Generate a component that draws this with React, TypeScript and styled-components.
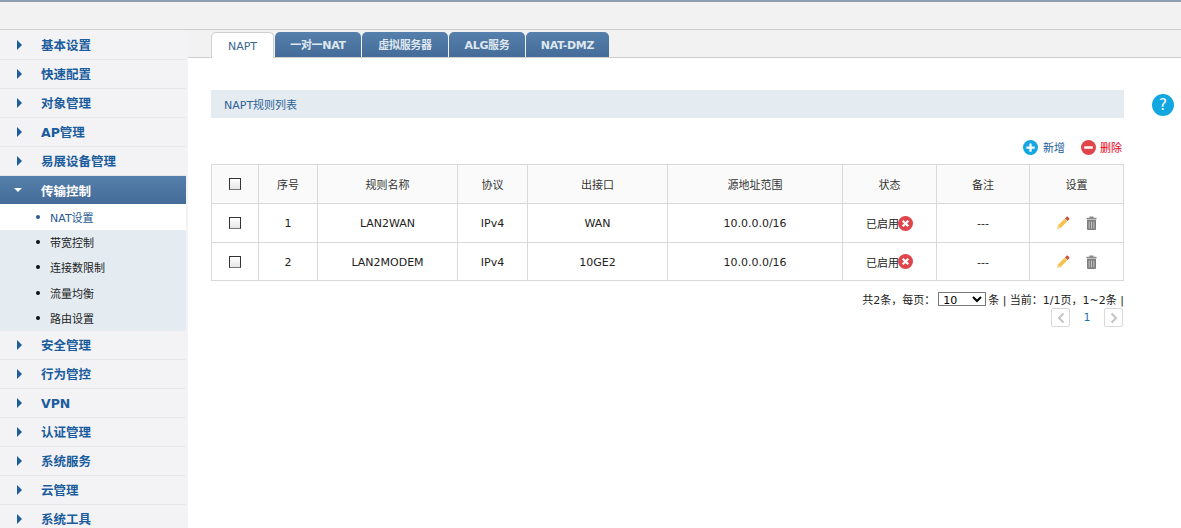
import styled, { createGlobalStyle } from "styled-components";

const FONT = `"DejaVu Sans", "Noto Sans CJK SC", sans-serif`;

const GlobalStyle = createGlobalStyle`
  html, body {
    margin: 0;
    padding: 0;
    height: 100%;
    background: #fff;
    overflow: hidden;
  }
  #root {
    height: 528px;
    overflow: hidden;
  }
  * {
    box-sizing: border-box;
  }
`;

const topMenus = ["基本设置", "快速配置", "对象管理", "AP管理", "易展设备管理"];
const subMenus = ["NAT设置", "带宽控制", "连接数限制", "流量均衡", "路由设置"];
const bottomMenus = ["安全管理", "行为管控", "VPN", "认证管理", "系统服务", "云管理", "系统工具"];
const tabs = ["NAPT", "一对一NAT", "虚拟服务器", "ALG服务", "NAT-DMZ"];
const tabWidths = [63, 86, 86, 76, 83];
const columns = [
  { title: "序号", width: 59 },
  { title: "规则名称", width: 140 },
  { title: "协议", width: 70 },
  { title: "出接口", width: 140 },
  { title: "源地址范围", width: 175 },
  { title: "状态", width: 94 },
  { title: "备注", width: 93 },
  { title: "设置", width: 94 },
];
const rules = [
  { id: 1, name: "LAN2WAN", protocol: "IPv4", port: "WAN", range: "10.0.0.0/16" },
  { id: 2, name: "LAN2MODEM", protocol: "IPv4", port: "10GE2", range: "10.0.0.0/16" },
];

function CircleIcon({ color, size, mark }: { color: string; size: number; mark: "plus" | "minus" | "cross" }) {
  return (
    <svg width={size} height={size} viewBox="0 0 16 16">
      <circle cx="8" cy="8" r="8" fill={color} />
      {mark === "plus" && <path d="M8 3.6v8.8M3.6 8h8.8" stroke="#fff" strokeWidth="2.4" />}
      {mark === "minus" && <path d="M3.4 8h9.2" stroke="#fff" strokeWidth="2.6" />}
      {mark === "cross" && <path d="M5 5l6 6M11 5l-6 6" stroke="#fff" strokeWidth="2.4" />}
    </svg>
  );
}

function PencilIcon() {
  return (
    <svg width="14" height="14" viewBox="0 0 14 14">
      <path d="M1 13l.9-3.6 6.6-6.6 2.7 2.7-6.6 6.6z" fill="#f5c14f" />
      <path d="M1 13l.9-3.6 2.7 2.7z" fill="#f8dc9a" />
      <path d="M8.9 2.4l1.5-1.5c.5-.5 1.1-.5 1.6 0l1.1 1.1c.5.5.5 1.100 0 1.600l-1.500 1.500z" fill="#c8573a" />
    </svg>
  );
}

function TrashIcon() {
  return (
    <svg width="11" height="14" viewBox="0 0 11 14">
      <path d="M3.500 .5h4v1.200h3v1.800H.5V1.700h3z" fill="#8a8a8a" />
      <path d="M1 4h9v9a1 1 0 0 1-1 1H2a1 1 0 0 1-1-1z" fill="#7d7d7d" />
      <path d="M3.200 5.500v7M5.500 5.500v7M7.800 5.500v7" stroke="#c4c4c4" strokeWidth="1" />
    </svg>
  );
}

export default function App() {
  return (
    <>
      <GlobalStyle />
      <Page>
        <TopBar />
        <Layout>
          <Sidebar>
            {topMenus.map((item) => (
              <MenuItem key={item}>
                <Arrow />
                {item}
              </MenuItem>
            ))}
            <ActiveMenu>
              <DownArrow />
              传输控制
            </ActiveMenu>
            <SubMenu>
              {subMenus.map((item, index) => (
                <SubItem key={item} $active={index === 0}>
                  <Dot $active={index === 0} />
                  {item}
                </SubItem>
              ))}
            </SubMenu>
            {bottomMenus.map((item) => (
              <MenuItem key={item}>
                <Arrow />
                {item}
              </MenuItem>
            ))}
          </Sidebar>
          <Main>
            <TabBar>
              {tabs.map((tab, index) => (
                <Tab key={tab} $active={index === 0} $width={tabWidths[index]}>
                  {tab}
                </Tab>
              ))}
            </TabBar>
            <Body>
              <Content>
                <PanelTitle>NAPT规则列表</PanelTitle>
                <Actions>
                  <ActionButton>
                    <CircleIcon color="#12a7e0" size={15} mark="plus" />
                    新增
                  </ActionButton>
                  <ActionButton $danger>
                    <CircleIcon color="#e0454b" size={15} mark="minus" />
                    删除
                  </ActionButton>
                </Actions>
                <RuleTable>
                  <thead>
                    <tr>
                      <HeadCell style={{ width: 47 }}>
                        <Check type="checkbox" />
                      </HeadCell>
                      {columns.map((col) => (
                        <HeadCell key={col.title} style={{ width: col.width }}>
                          {col.title}
                        </HeadCell>
                      ))}
                    </tr>
                  </thead>
                  <tbody>
                    {rules.map((rule) => (
                      <tr key={rule.id}>
                        <Cell>
                          <Check type="checkbox" />
                        </Cell>
                        <TextCell>{rule.id}</TextCell>
                        <TextCell>{rule.name}</TextCell>
                        <TextCell>{rule.protocol}</TextCell>
                        <TextCell>{rule.port}</TextCell>
                        <TextCell>{rule.range}</TextCell>
                        <Cell>
                          <Status>
                            已启用
                            <CircleIcon color="#e0454b" size={15} mark="cross" />
                          </Status>
                        </Cell>
                        <TextCell>---</TextCell>
                        <Cell>
                          <Tools>
                            <PencilIcon />
                            <TrashIcon />
                          </Tools>
                        </Cell>
                      </tr>
                    ))}
                  </tbody>
                </RuleTable>
                <Pager>
                  <PagerInfo>
                    共2条，每页：
                    <PageSize defaultValue="10">
                      <option value="10">10</option>
                      <option value="20">20</option>
                    </PageSize>
                    条 | 当前：1/1页，1~2条 |
                  </PagerInfo>
                  <PagerNav>
                    <PageButton>
                      <svg width="8" height="12" viewBox="0 0 8 12">
                        <path d="M6.500 1.500L2 6l4.500 4.500" fill="none" stroke="#c4c4c4" strokeWidth="2" />
                      </svg>
                    </PageButton>
                    <PageNumber>1</PageNumber>
                    <PageButton>
                      <svg width="8" height="12" viewBox="0 0 8 12">
                        <path d="M1.500 1.500L6 6l-4.500 4.500" fill="none" stroke="#c4c4c4" strokeWidth="2" />
                      </svg>
                    </PageButton>
                  </PagerNav>
                </Pager>
              </Content>
              <HelpButton>?</HelpButton>
            </Body>
          </Main>
        </Layout>
      </Page>
    </>
  );
}

const Page = styled.div`
  height: 528px;
  display: flex;
  flex-direction: column;
  font-family: ${FONT};
  font-size: 11px;
  color: #222;
`;

const TopBar = styled.header`
  height: 30px;
  flex-shrink: 0;
  background: #f2f2f2;
  border-top: 2px solid #8b9dae;
  border-bottom: 1px solid #cfcfcf;
`;

const Layout = styled.div`
  flex: 1;
  display: flex;
  min-height: 0;
`;

const Sidebar = styled.nav`
  width: 188px;
  flex-shrink: 0;
  background: #f3f3f6;
  padding: 1px 2px 0 0;
  overflow: hidden;
`;

const MenuItem = styled.div`
  height: 29px;
  display: flex;
  align-items: center;
  padding: 3px 0 1px 17px;
  font-size: 12.5px;
  line-height: 16px;
  font-weight: 700;
  color: #1a5c9c;
  border-bottom: 1px solid #e8e8e8;
`;

const Arrow = styled.i`
  width: 0;
  height: 0;
  margin: -2px 19px 0 0;
  border-top: 5px solid transparent;
  border-bottom: 5px solid transparent;
  border-left: 5px solid #1a5c9c;
`;

const ActiveMenu = styled.div`
  height: 28px;
  display: flex;
  align-items: center;
  padding-left: 14px;
  font-size: 12.5px;
  font-weight: 700;
  color: #fff;
  background: linear-gradient(#557fac, #456c98);
`;

const DownArrow = styled.i`
  width: 0;
  height: 0;
  margin-right: 19px;
  border-left: 4px solid transparent;
  border-right: 4px solid transparent;
  border-top: 4px solid #fff;
`;

const SubMenu = styled.div`
  height: 127px;
  background: #e4ecf2;
`;

const SubItem = styled.div<{ $active: boolean }>`
  height: ${({ $active }) => ($active ? "25.5px" : "25.33px")};
  display: flex;
  align-items: center;
  padding-left: 36px;
  font-size: 11px;
  color: ${({ $active }) => ($active ? "#2b5a94" : "#1c1c1c")};
  background: ${({ $active }) => ($active ? "#fff" : "transparent")};
`;

const Dot = styled.i<{ $active: boolean }>`
  width: 4px;
  height: 4px;
  margin-right: 10px;
  border-radius: 50%;
  background: ${({ $active }) => ($active ? "#2b5a94" : "#111")};
`;

const Main = styled.main`
  flex: 1;
  min-width: 0;
`;

const TabBar = styled.div`
  height: 28px;
  display: flex;
  align-items: flex-end;
  gap: 1px;
  padding-left: 23px;
  background: #f2f2f2;
  border-bottom: 1px solid #cfcfcf;
`;

const Tab = styled.div<{ $active: boolean; $width: number }>`
  width: ${({ $width }) => $width}px;
  height: ${({ $active }) => ($active ? "26px" : "25px")};
  margin-bottom: ${({ $active }) => ($active ? "-1px" : "0")};
  padding-top: 3px;
  display: flex;
  align-items: center;
  justify-content: center;
  border-radius: 5px 5px 0 0;
  font-size: 11px;
  line-height: 16px;
  letter-spacing: ${({ $active }) => ($active ? "0" : "-0.3px")};
  color: ${({ $active }) => ($active ? "#3b648f" : "#dfe7ef")};
  font-weight: ${({ $active }) => ($active ? 400 : 700)};
  background: ${({ $active }) => ($active ? "#fff" : "linear-gradient(#557fac, #456c98)")};
  border: ${({ $active }) => ($active ? "1px solid #cfcfcf" : "none")};
  border-bottom: none;
`;

const Body = styled.div`
  display: flex;
  align-items: flex-start;
  padding-left: 23px;
`;

const Content = styled.section`
  width: 913px;
  flex-shrink: 0;
  padding-top: 32px;
`;

const PanelTitle = styled.div`
  height: 28px;
  display: flex;
  align-items: center;
  padding-left: 13px;
  background: #e4ecf2;
  color: #2f6292;
`;

const Actions = styled.div`
  height: 46px;
  display: flex;
  align-items: center;
  justify-content: flex-end;
  gap: 16px;
  padding: 12px 2px 0 0;
`;

const ActionButton = styled.div<{ $danger?: boolean }>`
  display: flex;
  align-items: center;
  gap: ${({ $danger }) => ($danger ? "4px" : "5px")};
  color: ${({ $danger }) => ($danger ? "#e60012" : "#1a5c9c")};
`;

const RuleTable = styled.table`
  width: 912px;
  table-layout: fixed;
  border-collapse: collapse;
`;

const HeadCell = styled.th`
  height: 39px;
  padding: 0;
  font-weight: 400;
  color: #333;
  text-align: center;
  background: #fafafa;
  border: 1px solid #d9d9d9;
`;

const Cell = styled.td`
  height: 39px;
  padding: 0;
  text-align: center;
  color: #222;
  border: 1px solid #d9d9d9;
  tr:last-child & {
    height: 38px;
  }
`;

const TextCell = styled(Cell)`
  padding-top: 1px;
`;

const Check = styled.input`
  appearance: none;
  display: block;
  width: 12px;
  height: 12px;
  margin: 0 auto;
  background: linear-gradient(#fff, #e6e6e6);
  border: 1px solid #333;
  border-bottom-color: #777;
`;

const Status = styled.span`
  display: inline-flex;
  align-items: center;

  svg {
    margin-left: -1px;
  }
`;

const Tools = styled.div`
  display: flex;
  align-items: center;
  justify-content: center;
  gap: 16px;
`;

const Pager = styled.div`
  display: flex;
  flex-direction: column;
  align-items: flex-end;
  padding-top: 10px;
`;

const PagerInfo = styled.div`
  height: 16px;
  display: flex;
  align-items: center;
  white-space: pre;
  color: #222;
`;

const PageSize = styled.select`
  width: 48px;
  height: 14px;
  margin: 0 2px 0 3px;
  padding: 0;
  font-family: ${FONT};
  font-size: 11px;
  background: #fff;
  border: 1px solid #767676;
  border-radius: 0;
`;

const PagerNav = styled.div`
  display: flex;
  align-items: center;
  margin: 1px 1px 0 0;
`;

const PageButton = styled.div`
  width: 19px;
  height: 19px;
  display: flex;
  align-items: center;
  justify-content: center;
  border: 1px solid #d9d9d9;
  border-radius: 2px;
`;

const PageNumber = styled.span`
  width: 34px;
  text-align: center;
  color: #1d78b8;
`;

const HelpButton = styled.div`
  width: 22px;
  height: 22px;
  margin: 36px 0 0 28px;
  display: flex;
  align-items: center;
  justify-content: center;
  border-radius: 50%;
  background: #12a7e0;
  color: #fff;
  font-size: 15px;
  font-weight: 400;
`;
